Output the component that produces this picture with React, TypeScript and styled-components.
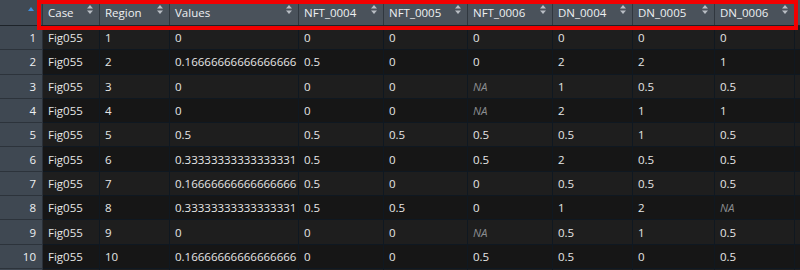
import * as React from 'react';
import styled, { createGlobalStyle } from 'styled-components';

const COLS = '43px 57px 70px 129px 85px 84px 85px 80px 82px 80px 1fr';

const GlobalStyle = createGlobalStyle`
    html, body {
        margin: 0;
        padding: 0;
        background: #1c1c1c;
    }
    body {
        font-family: "Open Sans", "Noto Sans", sans-serif;
    }
`

const Page = styled.div`
    position: relative;
    width: 800px;
    height: 270px;
    overflow: hidden;
    background: #1c1c1c;
    font-size: 11.5px;
`

const Row = styled.div<{ $odd?: boolean }>`
    display: grid;
    grid-template-columns: ${COLS};
    height: 24.3px;
    box-sizing: border-box;
    border-bottom: 1px solid #0f1821;
    background: ${p => p.$odd ? '#1e1e1e' : '#161616'};
`

const HeaderRow = styled.div`
    display: grid;
    grid-template-columns: ${COLS};
    height: 26px;
    box-sizing: border-box;
    background: #4a525b;
    border-bottom: 1px solid #1d2329;
`

const HeadCell = styled.div`
    position: relative;
    display: flex;
    align-items: center;
    justify-content: space-between;
    padding: 0 5px 1px 5px;
    color: #eef0f2;
    border-right: 1px solid #30373f;
    white-space: nowrap;
`

const CornerCell = styled.div`
    position: relative;
    background: #414a54;
    border-right: 1px solid #30373f;
`

const CornerMark = styled.span`
    position: absolute;
    top: 7px;
    right: 8px;
    width: 0;
    height: 0;
    border-left: 3px solid transparent;
    border-right: 3px solid transparent;
    border-bottom: 4px solid #3d8fe0;
`

const RowNum = styled.div`
    display: flex;
    align-items: center;
    justify-content: flex-end;
    padding-right: 6px;
    background: #3f4852;
    color: #eef0f2;
    border-right: 1px solid #2a3038;
    margin-bottom: -1px;
    border-bottom: 1px solid #2c333b;
`

const Cell = styled.div<{ $na?: boolean }>`
    display: flex;
    align-items: center;
    padding-left: 5px;
    color: ${p => p.$na ? '#8a8d90' : '#e6e6e6'};
    font-style: ${p => p.$na ? 'italic' : 'normal'};
    border-right: 1px solid #0f1821;
    white-space: nowrap;
    overflow: hidden;
`

const Highlight = styled.div`
    position: absolute;
    left: 37px;
    top: 0;
    width: 761px;
    height: 30px;
    box-sizing: border-box;
    border: 4px solid #f20000;
    pointer-events: none;
`

const SortIcon = () => (
    <svg width="6" height="9" viewBox="0 0 6 9" style={{ marginTop: -5, marginRight: 1 }}>
        <path d="M0 3.5 L3 0 L6 3.5 Z" fill="#b9bec4" />
        <path d="M0 5.5 L3 9 L6 5.5 Z" fill="#b9bec4" />
    </svg>
)

const headers = ['Case', 'Region', 'Values', 'NFT_0004', 'NFT_0005', 'NFT_0006', 'DN_0004', 'DN_0005', 'DN_0006'];

const rows: string[][] = [
    ['Fig055', '1', '0', '0', '0', '0', '0', '0', '0'],
    ['Fig055', '2', '0.16666666666666666', '0.5', '0', '0', '2', '2', '1'],
    ['Fig055', '3', '0', '0', '0', 'NA', '1', '0.5', '0.5'],
    ['Fig055', '4', '0', '0', '0', 'NA', '2', '1', '1'],
    ['Fig055', '5', '0.5', '0.5', '0.5', '0.5', '0.5', '1', '0.5'],
    ['Fig055', '6', '0.33333333333333331', '0.5', '0', '0.5', '2', '0.5', '0.5'],
    ['Fig055', '7', '0.16666666666666666', '0.5', '0', '0', '0.5', '0.5', '0.5'],
    ['Fig055', '8', '0.33333333333333331', '0.5', '0.5', '0', '1', '2', 'NA'],
    ['Fig055', '9', '0', '0', '0', 'NA', '0.5', '1', '0.5'],
    ['Fig055', '10', '0.16666666666666666', '0', '0', '0.5', '0.5', '0', '0.5'],
    ['', '', '', '', '', '', '', '', ''],
];

export default function App() {
    return <Page>
        <GlobalStyle />
        <HeaderRow>
            <CornerCell><CornerMark /></CornerCell>
            {headers.map(h => (
                <HeadCell key={h}>
                    <span>{h}</span>
                    <SortIcon />
                </HeadCell>
            ))}
            <div />
        </HeaderRow>
        {rows.map((r, i) => (
            <Row key={i} $odd={i % 2 === 0}>
                <RowNum>{i < 10 ? i + 1 : ''}</RowNum>
                {r.map((v, j) => (
                    <Cell key={j} $na={v === 'NA'}>{v}</Cell>
                ))}
                <div />
            </Row>
        ))}
        <Highlight />
    </Page>
}
